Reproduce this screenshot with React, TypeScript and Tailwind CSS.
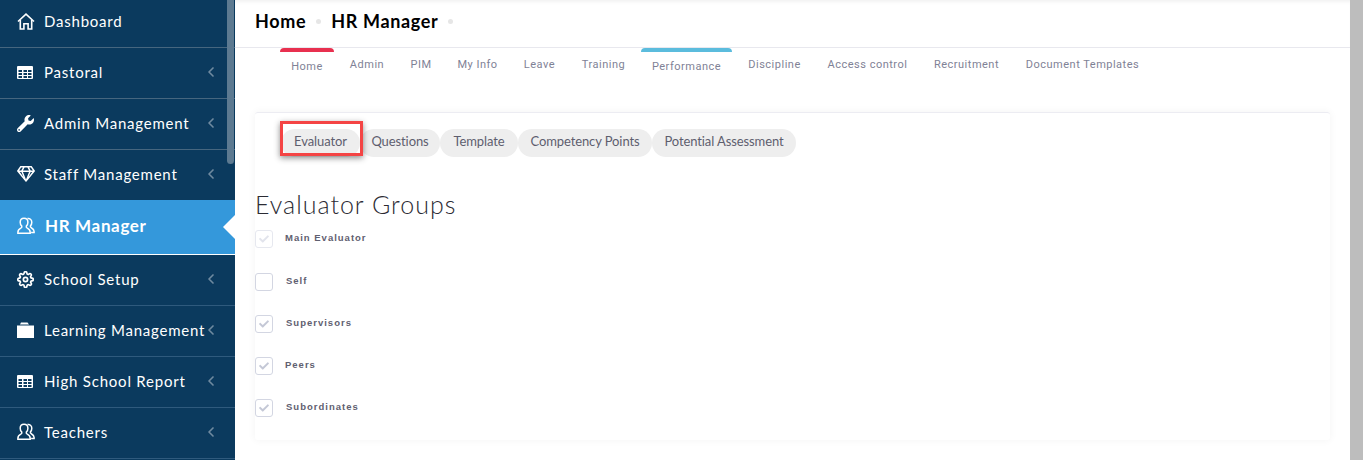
import { FaWrench, FaCheck, FaRegGem } from 'react-icons/fa';
import { FiSettings } from 'react-icons/fi';
import { ChevronLeft } from 'lucide-react';

function TableIcon() {
  return (
    <svg width="16" height="13" viewBox="0 0 16 13">
      <rect width="16" height="13" rx="1" fill="white" />
      {[1.5, 6.5, 11].map((x) =>
        [4, 7, 10].map((y) => <rect key={`${x}-${y}`} x={x} y={y} width="3.5" height="2" fill="#0b3a5e" />),
      )}
    </svg>
  );
}

function HomeIcon() {
  return (
    <svg width="18" height="17" viewBox="0 0 18 17" fill="none" stroke="white" strokeWidth="1.6">
      <path d="M1 8.5 9 1.2l8 7.3" />
      <path d="M3.3 7v9h3.6v-5.2h4.2V16h3.6V7" />
    </svg>
  );
}

function PeopleIcon() {
  return (
    <svg width="18" height="18" viewBox="0 0 18 18" fill="none" stroke="white" strokeWidth="1.5">
      <path d="M7 1.2c-2.4 0-3.8 1.8-3.8 4 0 1.700.6 3 1.600 3.900.3.900-.1 1.600-1 2.100C2.200 12 .9 12.800.9 15.200v1.100h12.300v-1.100c0-2.400-1.300-3.200-2.900-4-.9-.5-1.300-1.200-1-2.100 1-.9 1.600-2.200 1.600-3.900 0-2.200-1.400-4-3.900-4z" />
      <path d="M10.500 1.600c2.200-.5 4.300 1.100 4.300 3.600 0 1.600-.5 2.800-1.400 3.700-.2.800 0 1.300.8 1.800 1.500.8 2.900 1.500 2.900 3.800v1.100h-3" />
    </svg>
  );
}

function FolderIcon() {
  return (
    <svg width="17" height="16" viewBox="0 0 17 16" fill="white">
      <path d="M4 0.500h6.500L12 2.500H3z" />
      <rect x="0" y="3.500" width="17" height="12.500" />
    </svg>
  );
}

const rows = [
  { label: 'Dashboard', icon: <HomeIcon />, h: 'h-[51px] border-b border-[#46667f]', chevron: false },
  { label: 'Pastoral', icon: <TableIcon />, h: 'h-[51px] border-b border-[#46667f]', chevron: true },
  { label: 'Admin Management', icon: <FaWrench size={17} />, h: 'h-[51px] border-b border-[#46667f]', chevron: true },
  { label: 'Staff Management', icon: <FaRegGem size={18} />, h: 'h-[50px]', chevron: true },
];

const rows2 = [
  { label: 'School Setup', icon: <FiSettings size={17} strokeWidth={2.4} />, chevron: true },
  { label: 'Learning Management', icon: <FolderIcon />, chevron: true },
  { label: 'High School Report', icon: <TableIcon />, chevron: true },
  { label: 'Teachers', icon: <PeopleIcon />, chevron: true },
];

function SideRow({ label, icon, chevron, cls }: { label: string; icon: any; chevron: boolean; cls: string }) {
  return (
    <div className={`flex items-center pb-[2px] pl-[17px] text-white ${cls}`}>
      <span className="flex w-[27px] shrink-0 items-center">{icon}</span>
      <span className="text-[15px] tracking-[0.78px] whitespace-nowrap">{label}</span>
      {chevron && (
        <ChevronLeft size={16} strokeWidth={2.5} className="absolute left-[203px] text-[#6f8aa0]" />
      )}
    </div>
  );
}

const tabs = [
  { label: 'Home', w: 'w-[54px]', bar: 'bg-[#e8304f]' },
  { label: 'Admin', w: 'w-[56px]' },
  { label: 'PIM', w: 'w-[42px]' },
  { label: 'My Info', w: 'w-[61px]' },
  { label: 'Leave', w: 'w-[53px]' },
  { label: 'Training', w: 'w-[65px]' },
  { label: 'Performance', w: 'w-[91px]', bar: 'bg-[#5bbcdd]' },
  { label: 'Discipline', w: 'w-[75px]' },
  { label: 'Access control', w: 'w-[101px]' },
  { label: 'Recruitment', w: 'w-[87px]' },
  { label: 'Document Templates', w: 'w-[135px]' },
];

const pills = [
  { label: 'Evaluator', w: 'w-[79px]' },
  { label: 'Questions', w: 'w-[80px]' },
  { label: 'Template', w: 'w-[78px]' },
  { label: 'Competency Points', w: 'w-[134px]' },
  { label: 'Potential Assessment', w: 'w-[144px]' },
];

const groups = [
  { label: 'Main Evaluator', checked: true, faint: true, ml: 'ml-[12px]', mb: 'mb-[25px]' },
  { label: 'Self', checked: false, ml: 'ml-[13px]', mb: 'mb-[24px]' },
  { label: 'Supervisors', checked: true, ml: 'ml-[13px]', mb: 'mb-[24px]' },
  { label: 'Peers', checked: true, ml: 'ml-[12px]', mb: 'mb-[24px]' },
  { label: 'Subordinates', checked: true, ml: 'ml-[13px]', mb: '' },
];

export default function App() {
  return (
    <div className="flex h-[460px] overflow-hidden bg-white font-['Lato',sans-serif]">
      <aside className="relative w-[235px] shrink-0 bg-[#0b3a5e]">
        <div className="mt-[-3px]">
          {rows.map((r) => (
            <SideRow key={r.label} label={r.label} icon={r.icon} chevron={r.chevron} cls={r.h} />
          ))}
          <div className="relative flex h-[55px] items-center border-b border-white bg-[#3498db] pb-[2px] pl-[17px] text-white">
            <span className="flex w-[28px] shrink-0 items-center"><PeopleIcon /></span>
            <span className="text-[17px] font-bold tracking-[0.65px]">HR Manager</span>
            <span className="absolute right-0 top-[15px] h-0 w-0 border-y-[12px] border-r-[12px] border-y-transparent border-r-white" />
          </div>
          {rows2.map((r) => (
            <SideRow key={r.label} label={r.label} icon={r.icon} chevron={r.chevron} cls="h-[51px] border-b border-[#2f5a7d]" />
          ))}
        </div>
        <div className="absolute right-[1px] top-0 h-[164px] w-[7px] rounded-b bg-[#5d7a91]" />
      </aside>

      <main className="min-w-0 flex-1">
        <header className="flex h-[48px] items-center gap-[10px] border-b border-[#e8e8ee] pb-[4px] pl-[20px] text-[18px] font-bold tracking-[0.65px] text-black shadow-[inset_0_4px_4px_-3px_rgba(0,0,0,0.08)]">
          <span>Home</span>
          <span className="h-[5px] w-[5px] rounded-full bg-[#e6e6e6]" />
          <span>HR Manager</span>
          <span className="h-[5px] w-[5px] rounded-full bg-[#e6e6e6]" />
        </header>

        <nav className="ml-[45px] flex h-[64px] items-start gap-[5px] font-['Roboto',sans-serif] text-[11px] tracking-[0.5px] text-[#7f8296]">
          {tabs.map((t) => (
            <div key={t.label} className={`${t.w} shrink-0 text-center whitespace-nowrap`}>
              {t.bar ? (
                <div className={`mb-[7px] h-[4px] rounded-t-[5px] ${t.bar}`} />
              ) : (
                <div className="h-[9px]" />
              )}
              {t.label}
            </div>
          ))}
        </nav>

        <section className="relative mx-[20px] h-[328px] rounded-[3px] border-t border-[#ececf2] shadow-[0_0_8px_rgba(0,0,0,0.05)]">
          <div className="ml-[26px] flex pt-[16px] text-[13px] tracking-[-0.1px] text-[#5e5e6e]">
            {pills.map((p) => (
              <div key={p.label} className={`${p.w} flex h-[28px] shrink-0 items-center justify-center rounded-full bg-[#eeeeee] pb-[2px] whitespace-nowrap`}>
                {p.label}
              </div>
            ))}
          </div>
          <div className="pointer-events-none absolute left-[25px] top-[8px] h-[35px] w-[83px] border-[3px] border-[#f44444] shadow-[0_2px_6px_rgba(0,0,0,0.45)]" />

          <h2 className="mt-[32px] text-[25px] leading-[30px] font-light tracking-[1px] text-[#2b2b33]">Evaluator Groups</h2>
          <div className="mt-[11px] flex flex-col">
            {groups.map((g) => (
              <div key={g.label} className={`flex h-[18px] items-start ${g.mb}`}>
                <span className={`flex h-[18px] w-[18px] items-center justify-center rounded-[3px] border ${g.faint ? 'border-[#e6e8ef]' : 'border-[#d3d6e2]'}`}>
                  {g.checked && <FaCheck size={10} className={g.faint ? 'text-[#e2e4ec]' : 'text-[#c4c8d6]'} />}
                </span>
                <span className={`${g.ml} font-['Liberation_Sans',sans-serif] text-[9.5px] leading-[16px] font-bold tracking-[1px] text-[#5f6070]`}>{g.label}</span>
              </div>
            ))}
          </div>
        </section>
      </main>

      <div className="w-[13px] shrink-0 bg-[#bdbdbd]" />
    </div>
  );
}
